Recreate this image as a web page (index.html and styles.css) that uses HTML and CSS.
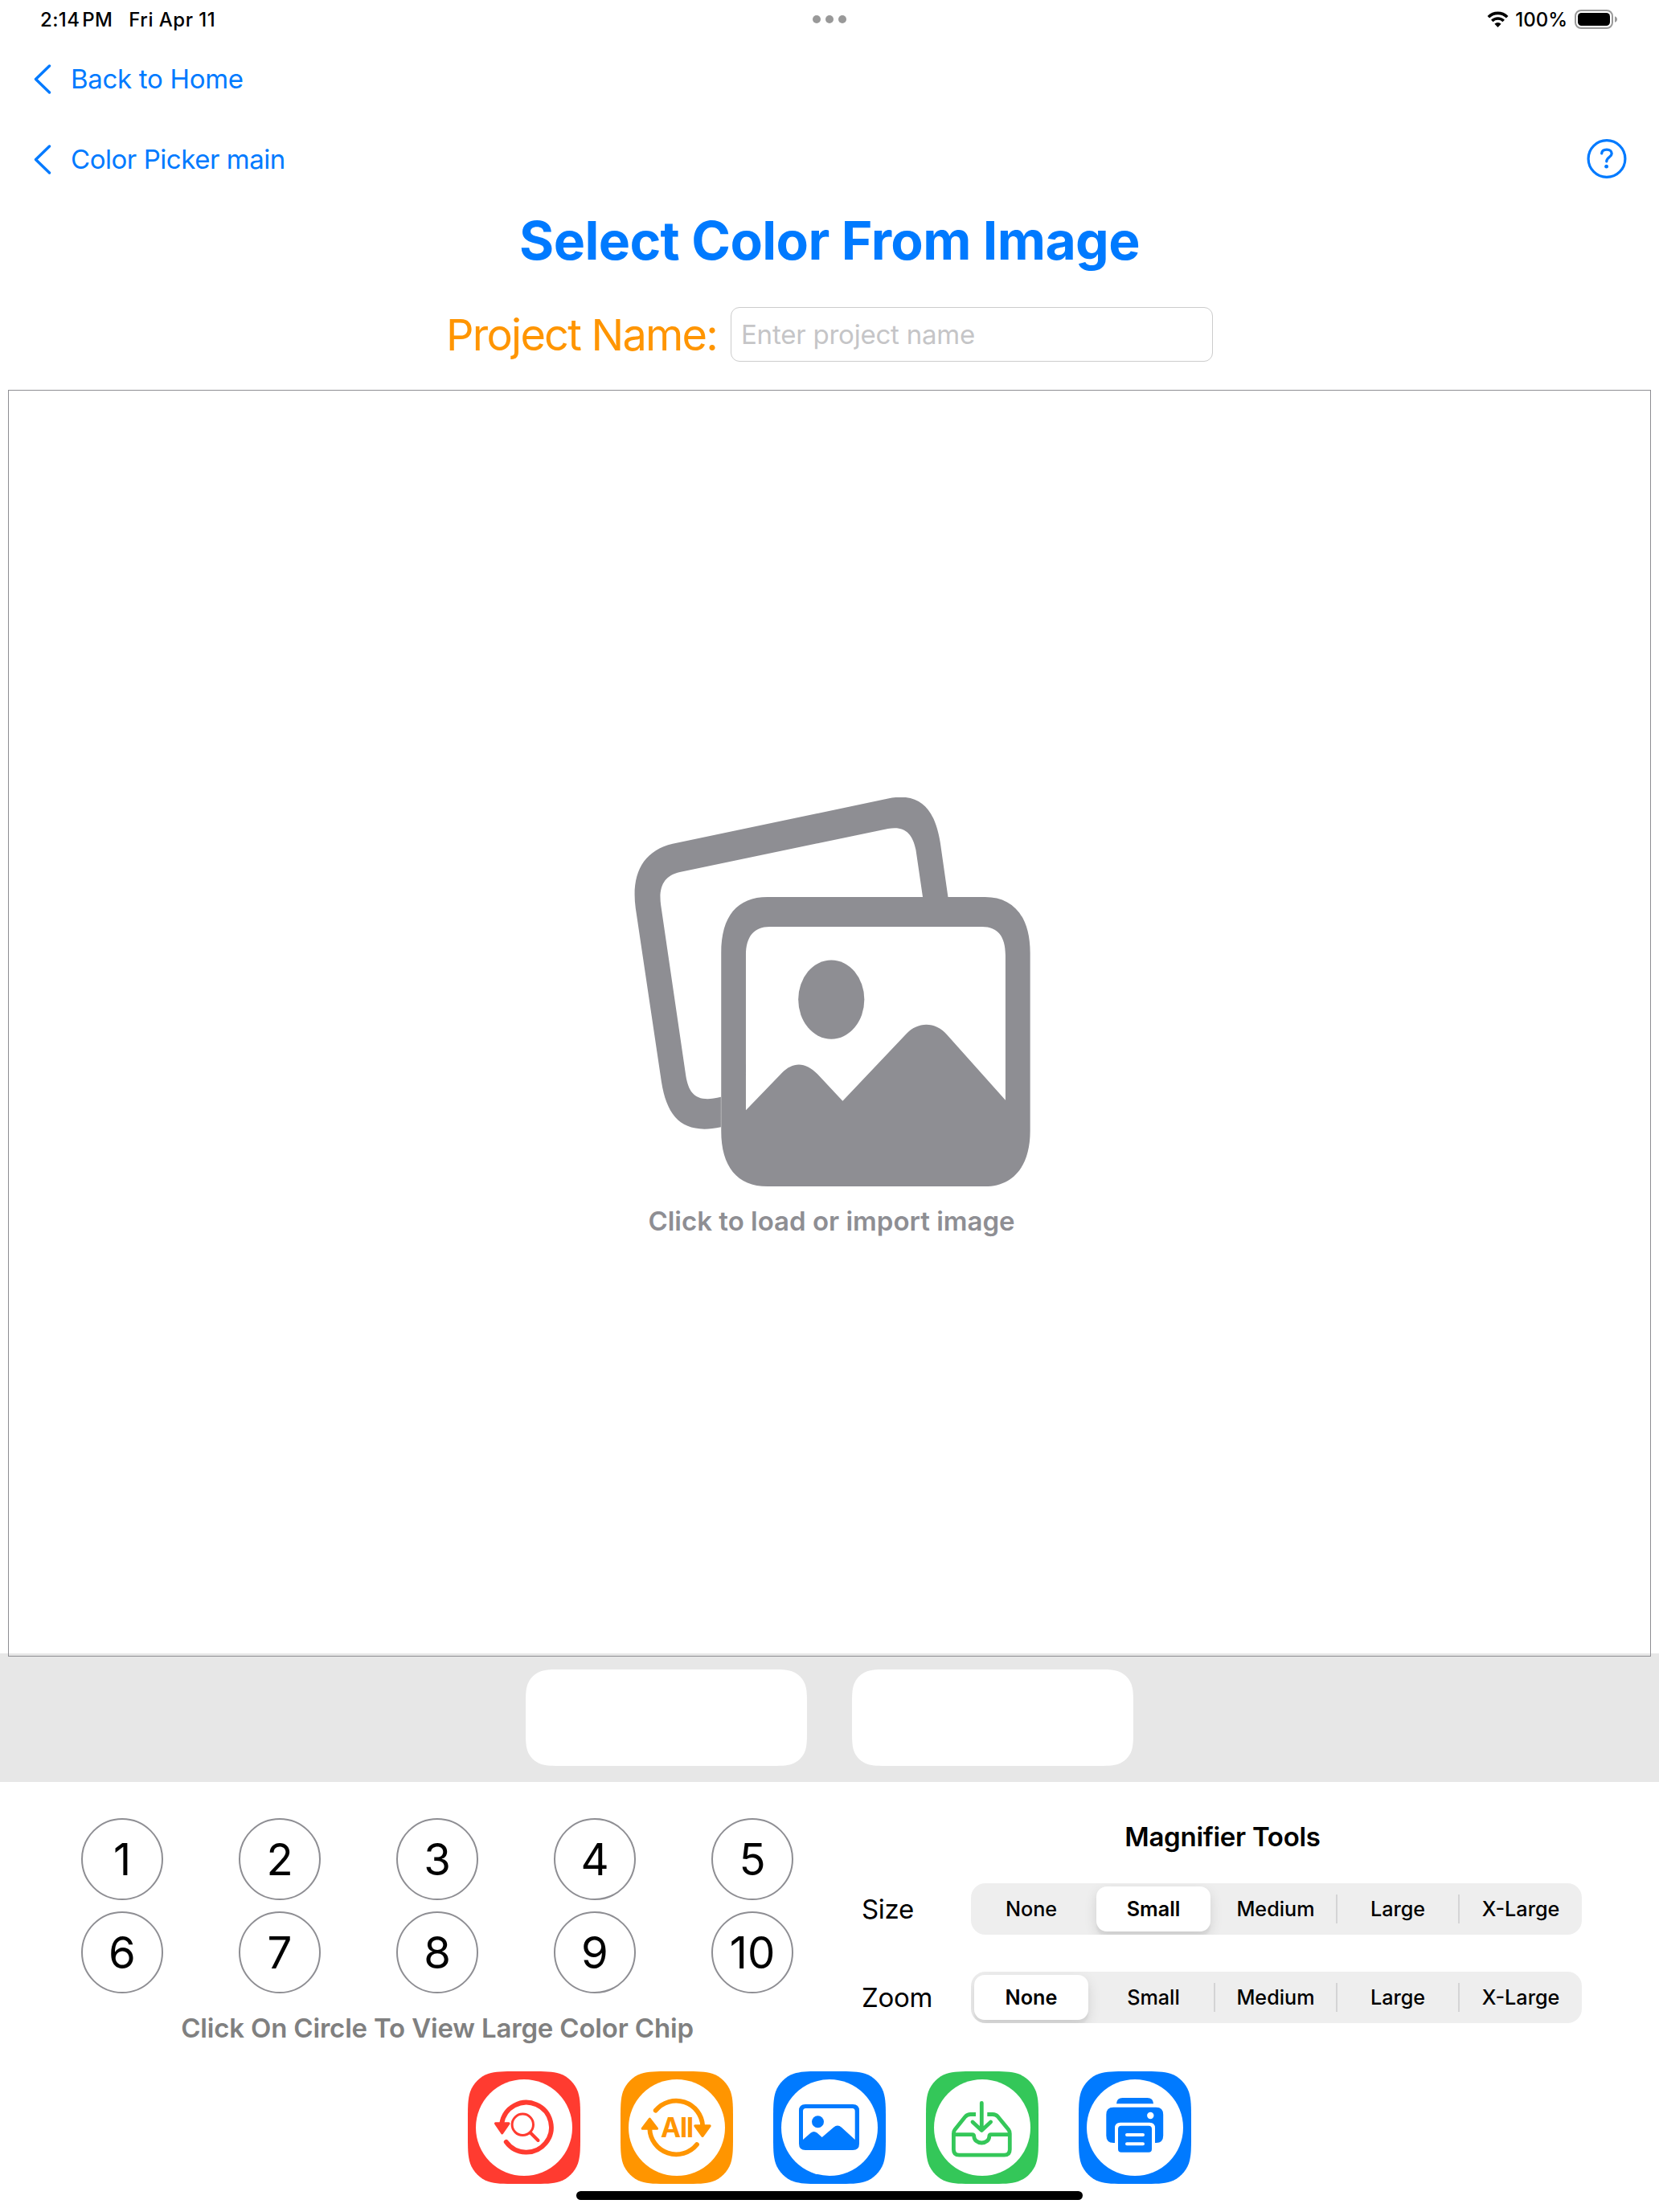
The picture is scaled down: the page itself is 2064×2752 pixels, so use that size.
FILE: index.html
```
<!DOCTYPE html>
<html lang="en">
<head>
<meta charset="utf-8">
<title>Select Color From Image</title>
<link rel="stylesheet" href="styles.css">
</head>
<body>
<div class="screen">
  <header class="status">
    <div class="status-left"><span class="time">2:14 PM</span><span class="date">Fri Apr 11</span></div>
    <div class="dots"><i></i><i></i><i></i></div>
    <div class="status-right">
      <svg class="wifi" viewBox="0 0 27 20"><path d="M1.8 7.2A16.6 16.6 0 0 1 25.2 7.2" fill="none" stroke="#000" stroke-width="3.6"/><path d="M6.3 12A10.2 10.2 0 0 1 20.7 12" fill="none" stroke="#000" stroke-width="3.6"/><path d="M13.5 20L9.4 15.8A5.8 5.8 0 0 1 17.6 15.8Z"/></svg>
      <span class="percent">100%</span>
      <svg class="battery" viewBox="0 0 54 24"><rect x="1" y="1" width="46" height="22" rx="7" fill="none" stroke="#999" stroke-width="2"/><rect x="4" y="4" width="40" height="16" rx="4.5"/><path d="M50 8.2C54 9.5 54 14.5 50 15.8Z" fill="#999"/></svg>
    </div>
  </header>

  <nav class="nav-row">
    <a class="back"><svg viewBox="0 0 22 37"><path d="M19.5 2L2.5 18.5L19.5 35"/></svg><span class="nav-home">Back to Home</span></a>
  </nav>
  <nav class="nav-row">
    <a class="back"><svg viewBox="0 0 22 37"><path d="M19.5 2L2.5 18.5L19.5 35"/></svg><span class="nav-main">Color Picker main</span></a>
    <svg class="help" viewBox="0 0 50 50"><circle cx="25" cy="24.5" r="22.9" stroke-width="3.2"/><path d="M18.7 17.8C19 14.5 21.500 13.1 25 13.1C28.800 13.1 31.200 15.100 31.200 18.100C31.200 22.500 24.800 22.700 24.800 27.800" stroke-width="3.3"/><circle class="help-dot" cx="24.600" cy="34.200" r="2.400"/></svg>
  </nav>

  <h1 class="title"><span>Select Color From Image</span></h1>

  <div class="project">
    <label for="project-name"><span>Project Name:</span></label>
    <div class="field" id="project-name"><span>Enter project name</span></div>
  </div>

  <main class="canvas">
    <svg class="photos" viewBox="81 84 1380 1267" preserveAspectRatio="none">
      <path d="M1174 408L1147 232C1128 120 1075 66 965 88L215 235C110 258 70 335 86 445L176 1010C196 1130 255 1182 383 1157V1059C300 1078 272 1052 261 990L174 435C165 375 185 338 240 327L965 186C1022 176 1050 200 1062 255L1086 408Z"/>
      <path fill-rule="evenodd" d="M545 408H1303C1400 408 1460 470 1460 590V1170C1460 1285 1400 1350 1303 1350H545C440 1350 384 1285 384 1170V590C384 470 440 408 545 408ZM470 1102V598C470 535 500 505 552 505H1293C1346 505 1374 535 1374 598V1069L1172 858C1130 813 1070 813 1028 854L807 1072L720 985C677 944 634 944 595 981Z"/>
      <ellipse cx="767.5" cy="742" rx="115" ry="128.5"/>
    </svg>
    <p class="load-hint"><span>Click to load or import image</span></p>
  </main>

  <section class="chips">
    <svg viewBox="0 0 350 120"><path d="M46 0H304C317 0 324 0 331 2.2C339 5 345 11 347.8 19C350 26 350 33 350 46V74C350 87 350 94 347.8 101C345 109 339 115 331 117.8C324 120 317 120 304 120H46C33 120 26 120 19 117.8C11 115 5 109 2.2 101C0 94 0 87 0 74V46C0 33 0 26 2.2 19C5 11 11 5 19 2.2C26 0 33 0 46 0Z"/></svg>
    <svg viewBox="0 0 350 120"><path d="M46 0H304C317 0 324 0 331 2.2C339 5 345 11 347.8 19C350 26 350 33 350 46V74C350 87 350 94 347.8 101C345 109 339 115 331 117.8C324 120 317 120 304 120H46C33 120 26 120 19 117.8C11 115 5 109 2.2 101C0 94 0 87 0 74V46C0 33 0 26 2.2 19C5 11 11 5 19 2.2C26 0 33 0 46 0Z"/></svg>
  </section>

  <section class="panel">
    <div class="swatches">
      <div class="circles">
        <b>1</b><b>2</b><b>3</b><b>4</b><b>5</b><b>6</b><b>7</b><b>8</b><b>9</b><b>10</b>
      </div>
      <p class="circle-hint"><span>Click On Circle To View Large Color Chip</span></p>
    </div>
    <div class="magnifier">
      <h2><span>Magnifier Tools</span></h2>
      <div class="tool">
        <span class="tool-name">Size</span>
        <div class="segments"><span>None</span><span class="on">Small</span><span>Medium</span><span class="line">Large</span><span class="line">X-Large</span></div>
      </div>
      <div class="tool">
        <span class="tool-name">Zoom</span>
        <div class="segments"><span class="on">None</span><span>Small</span><span class="line">Medium</span><span class="line">Large</span><span class="line">X-Large</span></div>
      </div>
    </div>
  </section>

  <svg width="0" height="0" class="defs"><defs>
    <g id="tile"><path d="M61 0H79C96.5 0 105.3 0 114.7 3C125.1 6.8 133.2 14.9 137 25.3C140 34.7 140 43.5 140 61V79C140 96.5 140 105.3 137 114.7C133.2 125.1 125.1 133.2 114.7 137C105.3 140 96.5 140 79 140H61C43.5 140 34.7 140 25.3 137C14.9 133.2 6.8 125.1 3 114.7C0 105.3 0 96.5 0 79V61C0 43.5 0 34.7 3 25.3C6.8 14.9 14.9 6.8 25.3 3C34.7 0 43.5 0 61 0Z" fill="currentColor"/><circle cx="70" cy="70" r="60" fill="#fff"/></g>
  </defs></svg>
  <footer class="actions">
    <svg class="action red" viewBox="0 0 140 140"><use href="#tile"/>
      <path class="ln" stroke-width="5.8" d="M47.7 87.8A31 31 0 1 0 42.2 65"/>
      <path class="head" d="M34.5 64.8H51L42.7 77Z"/>
      <circle class="ln" cx="68.3" cy="66.3" r="13.2" stroke-width="3"/>
      <path class="ln" stroke-width="4" d="M78 76.5L87.5 86"/>
    </svg>
    <svg class="action orange" viewBox="0 0 140 140"><use href="#tile"/>
      <path class="ln" stroke-width="5.8" d="M43.7 48.7A33 33 0 0 1 102.2 68M95 91A33 33 0 0 1 36.3 71"/>
      <path class="head" d="M27.2 71.2H45.5L36.3 59.2ZM92.8 67.8H111.2L102 80.5Z"/>
      <text x="50" y="82.2" textLength="41" lengthAdjust="spacing">All</text>
    </svg>
    <svg class="action blue" viewBox="0 0 140 140"><use href="#tile"/>
      <path class="fl" fill-rule="evenodd" d="M40 41H99Q107 41 107 49V90Q107 98 99 98H40Q32 98 32 90V49Q32 41 40 41ZM37 85V49.5Q37 46 40.5 46H98.5Q101.7 46 101.7 49.5V85L85 69.7Q80 65.5 75 69.7L60.7 82L54.5 76.5Q50.5 73.5 46.7 76.5Z"/>
      <circle class="fl" cx="55.5" cy="62.7" r="7.5"/>
    </svg>
    <svg class="action green" viewBox="0 0 140 140"><use href="#tile"/>
      <path class="ln butt" stroke-width="4.8" d="M62 53.5H55.5Q51.5 53.5 49 56.3L36 72.5Q34.4 74.5 34.4 77.5V97.2Q34.4 104.2 41.4 104.2H97.3Q104.3 104.2 104.3 97.2V77.5Q104.3 74.5 102.7 72.5L89.4 56.3Q87 53.5 83 53.5H76.3"/>
      <path class="ln butt" stroke-width="4.8" d="M34.5 78.7H57.5Q59.8 78.7 59.8 81A9.5 8 0 0 0 78.8 81Q78.8 78.7 81 78.7H104"/>
      <path class="ln" stroke-width="4.8" d="M69.3 39.3V72M58 63L69.3 73.5L80.6 63"/>
    </svg>
    <svg class="action blue" viewBox="0 0 140 140"><use href="#tile"/>
      <path class="fl" d="M47 40.3Q47.5 33 54.5 33H85.5Q92.5 33 93 40.3Z"/>
      <path class="fl" d="M43.3 44.7H96.2Q105.2 44.7 105.2 53.7V80Q105.2 89 96.2 89H95V70.5Q95 63.7 88.2 63.7H51.8Q45 63.7 45 70.5V89H43.3Q34.3 89 34.3 80V53.7Q34.3 44.7 43.3 44.7Z"/>
      <circle cx="89.3" cy="55" r="4.2" fill="#fff"/>
      <rect class="fl" x="49" y="67.8" width="42" height="33" rx="4"/>
      <path d="M60 79H80M60 90.3H80" stroke="#fff" stroke-width="4" stroke-linecap="round"/>
    </svg>
  </footer>
  <div class="home-bar"></div>
</div>
</body>
</html>
```
FILE: styles.css
```
* { box-sizing: border-box; margin: 0; padding: 0; }
body { background: #fff; color: #000; font-family: Inter, "Liberation Sans", sans-serif; }
.screen { width: 2064px; height: 2752px; display: flex; flex-direction: column; overflow: hidden; background: #fff; }
.screen > * { flex: none; }
span { white-space: nowrap; }

.status { height: 48px; display: grid; grid-template-columns: 1fr auto 1fr; align-items: center; font-size: 24px; font-weight: 500; }
.status-left { display: flex; padding-left: 50px; gap: 20px; }
.time { letter-spacing: .4px; word-spacing: -4px; }
.date { letter-spacing: .5px; }
.dots { display: flex; gap: 6px; }
.dots i { width: 10px; height: 10px; border-radius: 50%; background: #999; }
.status-right { display: flex; justify-content: flex-end; align-items: center; padding-right: 51px; }
.wifi { width: 27px; height: 20px; margin-right: 8px; }
.battery { width: 54px; height: 24px; margin-left: 9px; }

.nav-row { height: 100px; display: flex; align-items: center; justify-content: space-between; padding: 0 40px 0 42px; color: #007aff; font-size: 33px; }
.nav-home { letter-spacing: -.3px; }
.nav-main { letter-spacing: -.45px; }
.back { display: flex; align-items: center; gap: 24px; }
.back svg { width: 22px; height: 37px; fill: none; stroke: #007aff; stroke-width: 3.4; stroke-linecap: round; stroke-linejoin: round; }
.help { width: 50px; height: 50px; fill: none; stroke: #007aff; stroke-linecap: round; }
.help-dot { fill: #007aff; stroke: none; }

.title { height: 102px; display: flex; align-items: center; justify-content: center; color: #007aff; font-size: 66px; font-weight: 700; letter-spacing: -.6px; }
.project { height: 132px; display: flex; align-items: center; padding-left: 555px; }
.project label { width: 354px; color: #ff9500; font-size: 54px; letter-spacing: -1.75px; }
.field { width: 600px; height: 68px; display: flex; align-items: center; padding-left: 12px; border: 1px solid #ccc; border-radius: 11px; color: #c5c5c7; font-size: 33px; letter-spacing: -.22px; }

.canvas { position: relative; z-index: 1; height: 1576px; margin: 3px 10px 0; padding: 506px 0 0 5px; border: 1px solid #8e8e93; display: flex; flex-direction: column; align-items: center; color: #8e8e93; }
.photos { width: 493px; height: 484.5px; fill: #8e8e93; margin-left: 2px; }
.load-hint { margin-top: 22px; line-height: 40px; font-size: 33px; font-weight: 600; }

.chips { height: 160px; margin-top: -4px; background: #e7e7e7; display: flex; justify-content: center; align-items: center; gap: 56px; }
.chips svg { width: 350px; height: 120px; fill: #fff; }

.panel { height: 360px; display: flex; padding-left: 54px; }
.swatches { width: 980px; padding-top: 45px; }
.circles { display: grid; grid-template-columns: repeat(5, 196px); row-gap: 14px; justify-items: center; }
.circles b { width: 102px; height: 102px; border: 2px solid #8e8e93; border-radius: 50%; display: flex; align-items: center; justify-content: center; font-size: 54.5px; font-weight: 400; }
.circle-hint { margin-top: 23px; text-align: center; line-height: 40px; color: #808080; font-size: 33px; font-weight: 600; letter-spacing: -.18px; }
.magnifier { margin-left: 38px; width: 896px; padding-top: 48px; }
.magnifier h2 { padding-left: 2px; text-align: center; line-height: 40px; font-size: 33px; font-weight: 600; letter-spacing: -.28px; }
.tool { display: flex; align-items: center; justify-content: space-between; height: 64px; margin-top: 46px; }
.magnifier h2 + .tool { margin-top: 38px; }
.tool-name { font-size: 33px; letter-spacing: -.3px; padding-bottom: 1px; }
.segments { width: 760px; height: 64px; border-radius: 18px; background: #eee; overflow: hidden; padding: 4px 6px 4px 4px; display: grid; grid-template-columns: repeat(5, 142px); column-gap: 10px; font-size: 25.2px; font-weight: 500; }
.segments span { position: relative; display: flex; align-items: center; justify-content: center; }
.segments span:last-child { padding-left: 2px; }
.segments .on { background: #fff; border-radius: 13px; font-weight: 600; box-shadow: 0 6px 16px rgba(0,0,0,.12), 0 6px 2px rgba(0,0,0,.04); }
.segments .line::before { content: ""; position: absolute; left: -6px; top: 10px; width: 2px; height: 36px; background: #d4d4d5; }

.defs { position: absolute; }
.actions { display: flex; justify-content: center; gap: 50px; }
.action { width: 140px; height: 140px; }
.red { color: #ff3b30; }
.orange { color: #ff9500; }
.blue { color: #007aff; }
.green { color: #34c759; }
.fl { fill: currentColor; }
.ln { fill: none; stroke: currentColor; stroke-linecap: round; stroke-linejoin: round; }
.butt { stroke-linecap: butt; }
.head { fill: currentColor; stroke: currentColor; stroke-width: 3; stroke-linejoin: round; }
.action text { fill: currentColor; font: 700 33.5px Inter, sans-serif; }
.home-bar { width: 630px; height: 11px; margin: 9px auto 0; border-radius: 6px; background: #000; }
```
